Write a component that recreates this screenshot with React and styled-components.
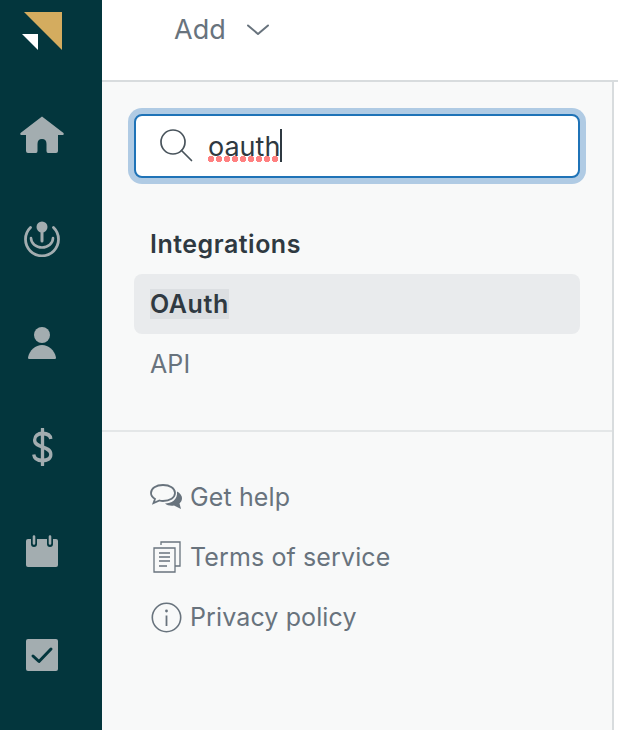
import styled, { createGlobalStyle } from 'styled-components';

const Global = createGlobalStyle`
  html, body { margin: 0; padding: 0; height: 100%; background: #fff; }
  body { font-family: Inter, "Liberation Sans", sans-serif; overflow: hidden; }
`;

// layout
const Page = styled.div`
  display: flex;
  width: 618px;
  height: 730px;
  overflow: hidden;
`;
const Rail = styled.nav`
  width: 102px;
  flex: none;
  box-sizing: border-box;
  padding-right: 18px;
  background: #03363d;
  display: flex;
  flex-direction: column;
  align-items: center;
`;
const LogoBox = styled.div`
  height: 83px;
  width: 100%;
  display: flex;
  justify-content: center;
  flex: none;
`;
const RailItem = styled.a`
  height: 104px;
  width: 100%;
  flex: none;
  display: flex;
  align-items: center;
  justify-content: center;
`;
const Main = styled.div`
  flex: 1;
  display: flex;
  flex-direction: column;
  min-width: 0;
`;
const TopBar = styled.header`
  height: 60px;
  flex: none;
  box-sizing: content-box;
  border-bottom: 2px solid #d8dcde;
  display: flex;
  align-items: center;
  padding-left: 72px;
  padding-bottom: 20px;
  gap: 21px;
`;
const AddLabel = styled.span`
  font-size: 27px;
  line-height: 60px;
  color: #68737d;
`;
const Panel = styled.aside`
  width: 510px;
  flex: 1;
  background: #f8f9f9;
  border-right: 2px solid #d8dcde;
  display: flex;
  flex-direction: column;
`;
const SearchArea = styled.div`
  padding: 32px 32px 0 32px;
`;
const SearchBox = styled.div`
  height: 60px;
  border: 2px solid #1f73b7;
  border-radius: 8px;
  background: #fff;
  box-shadow: 0 0 0 6px #b0cbe4;
  display: flex;
  align-items: center;
  padding-left: 24px;
  gap: 14px;
`;
const SearchText = styled.span`
  font-size: 27px;
  line-height: 34px;
  color: #2f3941;
  position: relative;
  top: 1px;
`;
const Squiggle = styled.span`
  position: absolute;
  left: 0;
  right: 0;
  bottom: 2px;
  height: 6px;
  background: radial-gradient(circle at 3px 3px, #ff8080 3px, transparent 3.4px) 0 0 / 8px 6px repeat-x;
`;
const Caret = styled.span`
  position: absolute;
  right: -2px;
  top: -1px;
  width: 2px;
  height: 33px;
  background: #2f3941;
`;
const Results = styled.section`
  padding: 48px 32px 36px 32px;
  border-bottom: 2px solid #e4e7e8;
  display: flex;
  flex-direction: column;
`;
const SectionTitle = styled.h3`
  margin: 0 0 12px 0;
  padding-left: 16px;
  font-size: 25px;
  line-height: 36px;
  font-weight: 600;
  letter-spacing: 0.5px;
  color: #2f3941;
`;
const ResultRow = styled.a`
  height: 60px;
  display: flex;
  align-items: center;
  padding-left: 16px;
  border-radius: 8px;
  font-size: 25px;
  letter-spacing: ${(p) => (p.$active ? '0.6px' : '0.1px')};
  font-weight: ${(p) => (p.$active ? 600 : 400)};
  color: ${(p) => (p.$active ? '#2f3941' : '#68737d')};
  background: ${(p) => (p.$active ? '#e9ebed' : 'transparent')};
`;
const Highlight = styled.mark`
  background: #dcdfe2;
  color: inherit;
  line-height: 30px;
  display: inline-block;
`;
const Links = styled.div`
  padding: 35px 0 0 48px;
  display: flex;
  flex-direction: column;
`;
const LinkRow = styled.a`
  height: 60px;
  display: flex;
  align-items: center;
  gap: 7px;
  font-size: 25px;
  letter-spacing: 0.12px;
  color: #68737d;
`;
const LinkIcon = styled.span`
  width: 33px;
  height: 36px;
  flex: none;
  display: flex;
  align-items: center;
  justify-content: center;
`;

// icons
const GREY = '#a3adb0';

const Logo = () => (
  <svg width="40" height="40" viewBox="0 0 40 40" style={{ marginTop: 12 }}>
    <polygon points="2,0 40,0 40,38" fill="#d4ac5f" />
    <polygon points="0,22 16,22 16,38" fill="#fff" />
  </svg>
);
const HomeIcon = () => (
  <svg width="46" height="38" viewBox="0 0 46 38">
    <path d="M23 0.5 L44.5 17 Q45.5 19 43 19 H39 V35 Q39 37 37 37 H29 Q27.5 37 27.5 35 V28 Q27.5 23 23 23 Q18.5 23 18.5 28 V35 Q18.5 37 17 37 H9 Q7 37 7 35 V19 H3 Q0.5 19 1.5 17 Z" fill={GREY} />
  </svg>
);
const SupportIcon = () => (
  <svg width="36" height="36" viewBox="0 0 36 36" fill="none" stroke={GREY}>
    <circle cx="18" cy="6" r="5.5" fill={GREY} stroke="none" />
    <path d="M18 9 V20" strokeWidth="3" strokeLinecap="round" />
    <path d="M7 17 A11 9.5 0 0 0 29 17" strokeWidth="2.6" strokeLinecap="round" />
    <path d="M6.5 6.5 A16.5 16.5 0 1 0 29.5 6.5" strokeWidth="2.8" strokeLinecap="round" />
  </svg>
);
const PersonIcon = () => (
  <svg width="28" height="32" viewBox="0 0 28 32">
    <circle cx="14" cy="8" r="8" fill={GREY} />
    <path d="M1 32 Q0 32 0 30.5 C1.5 23 7.5 18 14 18 C20.5 18 26.5 23 28 30.5 Q28 32 27 32 Z" fill={GREY} />
  </svg>
);
const DollarIcon = () => (
  <svg width="21" height="38" viewBox="0 0 24 38" preserveAspectRatio="none" fill="none" stroke={GREY} strokeWidth="3.8">
    <path d="M12 1 V37" strokeLinecap="round" />
    <path d="M21.5 11 C21 7 17 5.5 12 5.5 C6.5 5.5 3 8 3 12 C3 16 7 17.5 12 19 C17 20.5 21.5 22 21.5 26.5 C21.5 30.5 17.5 32.5 12 32.5 C6.5 32.5 2.5 30.5 2 26.5" />
  </svg>
);
const CalendarIcon = () => (
  <svg width="32" height="32" viewBox="0 0 32 32">
    <path d="M2 4 H30 Q32 4 32 6 V30 Q32 32 30 32 H2 Q0 32 0 30 V6 Q0 4 2 4 Z" fill={GREY} />
    <path d="M8 1.5 V9 M24 1.5 V9" stroke="#03363d" strokeWidth="6" strokeLinecap="round" />
    <path d="M8 1.5 V8.5 M24 1.5 V8.5" stroke={GREY} strokeWidth="2.6" strokeLinecap="round" />
  </svg>
);
const CheckIcon = () => (
  <svg width="32" height="32" viewBox="0 0 32 32">
    <rect width="32" height="32" rx="2" fill={GREY} />
    <path d="M7 17 L13 22.5 L25 10" fill="none" stroke="#03363d" strokeWidth="3" strokeLinecap="round" strokeLinejoin="round" />
  </svg>
);
const Chevron = () => (
  <svg width="22" height="12" viewBox="0 0 22 12" fill="none" stroke="#68737d" strokeWidth="2">
    <path d="M1 1.5 L11 10 L21 1.5" strokeLinecap="round" strokeLinejoin="round" />
  </svg>
);
const SearchIcon = () => (
  <svg width="34" height="34" viewBox="0 0 34 34" fill="none" stroke="#49545c" strokeWidth="1.7">
    <circle cx="13" cy="13" r="12" />
    <path d="M21.5 21.5 L31.5 31.5" strokeLinecap="round" />
  </svg>
);
const ChatIcon = () => (
  <svg width="33" height="26" viewBox="0 0 33 26" fill="none" stroke="#68737d" strokeWidth="1.8">
    <path d="M13 1 C6 1 1 4.5 1 9 C1 11.5 2.5 13.5 5 15 L3.5 19 L9.5 16.5 C11 17 12 17 13 17 C20 17 25 13.5 25 9 C25 4.5 20 1 13 1 Z" />
    <path d="M27 7.5 C30 9 32 11.5 32 14 C32 16.5 31 18 29.5 19.5 L31 25 L24 21.5 C21 22 17 21.5 15 19.5 C21 19.5 28 16 27 7.5 Z" fill="#68737d" stroke="none" />
  </svg>
);
const DocsIcon = () => (
  <svg width="28" height="32" viewBox="0 0 28 32" fill="none" stroke="#68737d" strokeWidth="1.3">
    <path d="M8 4 V1 H27 V25 H22" />
    <path d="M1 7 H22 V31 H1 Z" fill="#f8f9f9" />
    <path d="M6 12 H17 M6 16 H17 M6 20 H17 M6 25 H14" />
  </svg>
);
const InfoIcon = () => (
  <svg width="31" height="31" viewBox="0 0 31 31" fill="none" stroke="#68737d" strokeWidth="1.6">
    <circle cx="15.5" cy="15.5" r="14.2" />
    <circle cx="15.5" cy="9" r="1.4" fill="#68737d" stroke="none" />
    <path d="M15.5 13.5 V24" strokeWidth="1.8" />
  </svg>
);

export default function App() {
  return (
    <Page>
      <Global />
      <Rail>
        <LogoBox>
          <Logo />
        </LogoBox>
        <RailItem><HomeIcon /></RailItem>
        <RailItem><SupportIcon /></RailItem>
        <RailItem><PersonIcon /></RailItem>
        <RailItem><DollarIcon /></RailItem>
        <RailItem><CalendarIcon /></RailItem>
        <RailItem><CheckIcon /></RailItem>
      </Rail>
      <Main>
        <TopBar>
          <AddLabel>Add</AddLabel>
          <Chevron />
        </TopBar>
        <Panel>
          <SearchArea>
            <SearchBox>
              <SearchIcon />
              <SearchText>
                oauth
                <Squiggle />
                <Caret />
              </SearchText>
            </SearchBox>
          </SearchArea>
          <Results>
            <SectionTitle>Integrations</SectionTitle>
            <ResultRow $active>
              <Highlight>OAuth</Highlight>
            </ResultRow>
            <ResultRow>API</ResultRow>
          </Results>
          <Links>
            <LinkRow><LinkIcon><ChatIcon /></LinkIcon>Get help</LinkRow>
            <LinkRow><LinkIcon><DocsIcon /></LinkIcon>Terms of service</LinkRow>
            <LinkRow><LinkIcon><InfoIcon /></LinkIcon>Privacy policy</LinkRow>
          </Links>
        </Panel>
      </Main>
    </Page>
  );
}
